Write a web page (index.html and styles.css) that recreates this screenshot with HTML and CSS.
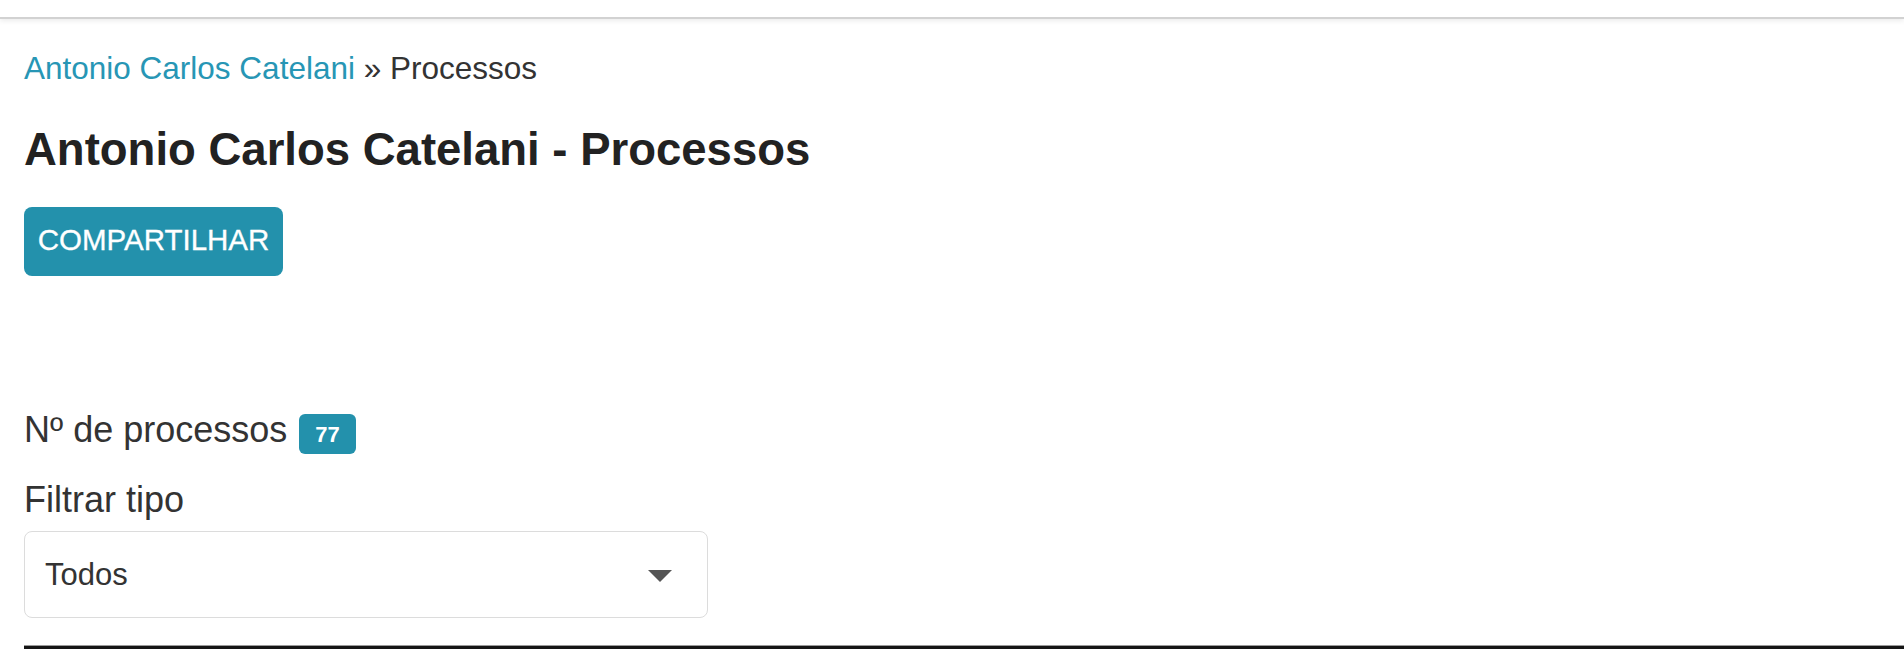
FILE: index.html
```html
<!DOCTYPE html>
<html lang="pt-BR">

<head>
    <meta charset="UTF-8">
    <meta name="viewport" content="width=device-width, initial-scale=1.0">
    <title>Antonio Carlos Catelani - Processos</title>
    <link rel="stylesheet" href="styles.css">
</head>

<body>
    <header class="topbar"></header>

    <main class="page">
        <nav class="crumbs">
            <a href="#">Antonio Carlos Catelani</a> » Processos
        </nav>

        <h1 class="title">Antonio Carlos Catelani - Processos</h1>

        <button class="btn-share">COMPARTILHAR</button>

        <p class="count">Nº de processos <span class="badge">77</span></p>

        <label class="filter-label" for="tipo">Filtrar tipo</label>
        <div class="select-wrap">
            <select id="tipo">
                <option>Todos</option>
            </select>
        </div>

        <div class="table-rule"></div>
    </main>
</body>

</html>
```

FILE: styles.css
```css
* {
    box-sizing: border-box;
    margin: 0;
    padding: 0;
}

body {
    font-family: 'Liberation Sans', Arial, sans-serif;
    background-color: #fff;
    color: #333;
    overflow: hidden;
}

.topbar {
    height: 19px;
    background: #fff;
    border-bottom: 2px solid #d2d2d2;
    box-shadow: 0 2px 5px rgba(0, 0, 0, 0.08);
}

.page {
    padding: 26px 0 0 24px;
}

.crumbs {
    font-size: 31.5px;
    line-height: 46px;
    color: #333;
}

.crumbs a {
    color: #2796b5;
    text-decoration: none;
}

.title {
    margin-top: 32px;
    font-size: 45.5px;
    line-height: 54px;
    font-weight: bold;
    color: #222;
}

.btn-share {
    display: block;
    margin-top: 30px;
    width: 259px;
    height: 69px;
    padding: 0 0 3px;
    line-height: 66px;
    text-align: center;
    font-family: inherit;
    font-size: 29.5px;
    color: #fff;
    background-color: #2391ac;
    border: none;
    border-radius: 8px;
    cursor: pointer;
    -webkit-text-stroke: 0.3px #fff;
}

.count {
    margin-top: 128px;
    font-size: 36px;
    line-height: 52px;
}

.badge {
    display: inline-block;
    margin-left: 2px;
    padding: 10px 16px 8px;
    font-size: 22px;
    line-height: 1;
    font-weight: bold;
    color: #fff;
    background-color: #2391ac;
    border-radius: 6px;
}

.filter-label {
    display: block;
    margin-top: 18px;
    font-size: 36px;
    line-height: 52px;
}

.select-wrap {
    position: relative;
    width: 684px;
    margin-top: 5px;
}

.select-wrap select {
    display: block;
    width: 100%;
    height: 87px;
    padding: 0 20px;
    font-family: inherit;
    font-size: 31px;
    color: #333;
    background: #fff;
    border: 1px solid #dcdcdc;
    border-radius: 8px;
    appearance: none;
    -webkit-appearance: none;
    outline: none;
}

/* dropdown arrow */
.select-wrap::after {
    content: '';
    position: absolute;
    right: 36px;
    top: 39px;
    border-left: 12px solid transparent;
    border-right: 12px solid transparent;
    border-top: 12px solid #555;
    pointer-events: none;
}

.table-rule {
    margin-top: 27px;
    height: 4px;
    border-top: 1px solid #9a9a9a;
    background: #151515;
}
```
